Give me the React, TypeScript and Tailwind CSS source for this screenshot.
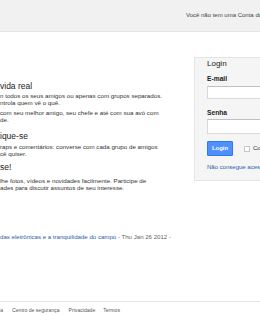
import React from "react";

export default function App() {
  const font = { fontFamily: '"Liberation Sans", Arial, sans-serif' };
  return (
    <div className="w-[260px] h-[315px] overflow-hidden bg-white text-[#333]" style={font}>
      <div className="h-[32px] bg-[#f1f1f1] border-b border-[#e5e5e5] flex items-center pl-[186px]">
        <span className="text-[6px] whitespace-nowrap text-[#444]">Você não tem uma Conta do Google?</span>
      </div>
      <div className="h-[269px] flex">
        <div className="w-[194px] shrink-0 overflow-hidden pt-[49.5px] whitespace-nowrap">
          <h3 className="text-[8.5px] leading-[9px] text-[#222]">vida real</h3>
          <p className="text-[6.2px] leading-[7.5px] mt-[1px]">
            n todos os seus amigos ou apenas com grupos separados.<br />ntrola quem vê o quê.
          </p>
          <p className="text-[6.2px] leading-[7.5px] mt-[2px]">
            com seu melhor amigo, seu chefe e até com sua avó com<br />de.
          </p>
          <h3 className="text-[8.5px] leading-[9px] mt-[8px] text-[#222]">ique-se</h3>
          <p className="text-[6.2px] leading-[7.5px] mt-[2px]">
            raps e comentários: converse com cada grupo de amigos<br />cê quiser.
          </p>
          <h3 className="text-[8.5px] leading-[9px] mt-[5.5px] text-[#222]">se!</h3>
          <p className="text-[6.2px] leading-[7.5px] mt-[4.75px]">
            lhe fotos, vídeos e novidades facilmente. Participe de<br />ades para discutir assuntos de seu interesse.
          </p>
          <p className="text-[6.1px] leading-[7.5px] mt-[41px]">
            <span className="text-[#2a5db0]">das eletrônicas e a tranquilidade do campo</span>
            <span className="text-[#666]"> - Thu Jan 26 2012 -</span>
          </p>
        </div>
        <div className="mt-[25px] h-[124px] w-[100px] shrink-0 bg-[#f5f5f5] border border-[#e5e5e5] pl-[12px] pt-[1px] whitespace-nowrap overflow-hidden">
          <div className="text-[8px] leading-[9px] text-[#222]">Login</div>
          <div className="text-[6.7px] leading-[8px] font-bold mt-[7px] text-[#222]">E-mail</div>
          <div className="mt-[3px] h-[13px] bg-white border border-[#d9d9d9] border-t-[#c0c0c0]"></div>
          <div className="text-[6.7px] leading-[8px] font-bold mt-[10px] text-[#222]">Senha</div>
          <div className="mt-[2px] h-[15px] bg-white border border-[#d9d9d9] border-t-[#c0c0c0]"></div>
          <div className="flex items-center mt-[7px]">
            <div className="shrink-0 w-[26px] h-[15px] bg-[#4d90fe] border border-[#3079ed] rounded-[1px] flex items-center justify-center text-white text-[5.9px] font-bold">Login</div>
            <div className="shrink-0 ml-[11px] w-[6px] h-[6px] bg-white border border-[#c6c6c6]"></div>
            <span className="ml-[3px] text-[6px]">Continuar conectado</span>
          </div>
          <div className="mt-[7px] text-[6px] leading-[8px] text-[#2a5db0]">Não consegue acessar sua conta?</div>
        </div>
      </div>
      <div className="border-t border-[#e5e5e5] pt-[5px] flex text-[5.1px] leading-[7px] text-[#555] whitespace-nowrap">
        <span className="-ml-[10px]">Ajuda</span>
        <span className="ml-[9px]">Centro de segurança</span>
        <span className="ml-[9px]">Privacidade</span>
        <span className="ml-[8px]">Termos</span>
      </div>
    </div>
  );
}
